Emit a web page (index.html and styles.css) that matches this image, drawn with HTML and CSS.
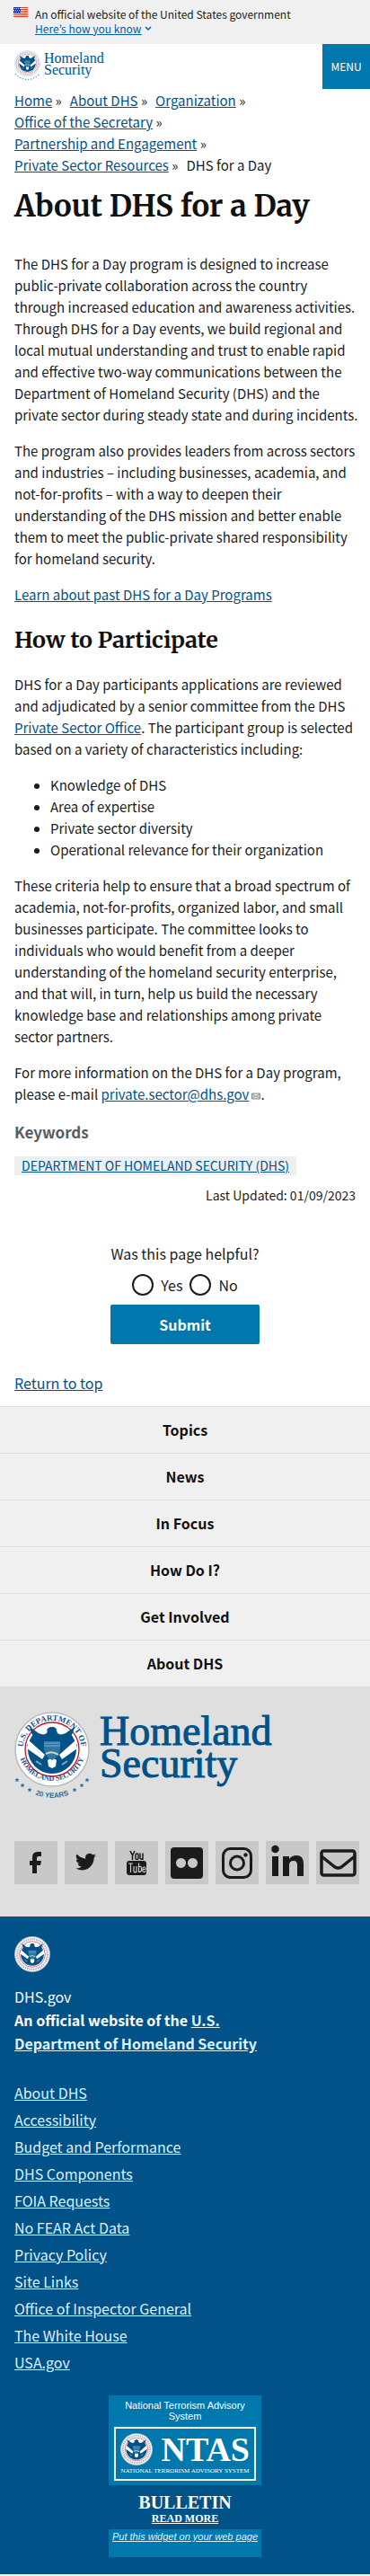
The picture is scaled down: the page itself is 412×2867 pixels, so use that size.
FILE: index.html
```html
<!DOCTYPE html>
<html lang="en">
<head>
<meta charset="utf-8">
<meta name="viewport" content="width=device-width, initial-scale=1">
<title>About DHS for a Day | Homeland Security</title>
<link rel="stylesheet" href="styles.css">
</head>
<body>
<svg class="sprite" aria-hidden="true">
  <defs>
    <path id="ring-top" d="M13 57A32.500 32.500 0 1 1 71 57"/>
    <path id="ring-bottom" d="M4.500 44A37.800 37.800 0 0 0 79.500 44"/>
    <symbol id="seal-core" viewBox="0 0 84 84">
      <circle cx="42" cy="42" r="41" fill="#fff" stroke="#b4b9c4" stroke-width="1.500"/>
      <circle cx="42" cy="42" r="30" fill="#fff" stroke="#c41230" stroke-width="1.300"/>
      <circle cx="42" cy="42" r="27" fill="#005288"/>
      <path d="M23 23Q31 28 36 24Q37 18 42 17Q47 18 48 24Q53 28 61 23L55 17Q42 10 29 17Z" fill="#fff"/>
      <path d="M36 21Q37 17 42 17Q46 17 47 20L44 22V28H38L39 22Z" fill="#005288"/>
      <path d="M17 17L27 24L36 27L33 35Q20 32 17 17ZM67 17L57 24L48 27L51 35Q64 32 67 17Z" fill="#005288"/>
      <path d="M14 36L34 53L30 58Q16 52 14 36ZM70 36L50 53L54 58Q68 52 70 36Z" fill="#005288"/>
      <path d="M16 32L34 48L31 53L14 41ZM68 32L50 48L53 53L70 41ZM37 54L42 51L47 54L46 61L42 63L38 61Z" fill="#fff"/>
      <path d="M33 33H51V42Q50 50 42 54Q34 50 33 42Z" fill="#2e78a7"/>
      <path d="M33 35H51M33 38H51" stroke="#8cb6d3" stroke-width=".8"/>
      <path d="M35 47Q42 43 49 48" stroke="#d6d2a2" stroke-width="2" fill="none"/>
      <path d="M24 55L30 59M59 55L53 59" stroke="#84a9bd" stroke-width="2"/>
    </symbol>
    <symbol id="seal" viewBox="0 0 84 84">
      <use href="#seal-core" width="84" height="84"/>
      <text class="ring ring-upper"><textPath href="#ring-top" startOffset="50%" text-anchor="middle">U.S. DEPARTMENT OF</textPath></text>
      <text class="ring"><textPath href="#ring-bottom" startOffset="50%" text-anchor="middle">HOMELAND SECURITY</textPath></text>
    </symbol>
    <symbol id="seal-small" viewBox="0 0 84 84">
      <use href="#seal-core" width="84" height="84"/>
      <circle cx="42" cy="42" r="35.500" fill="none" stroke="#a9b3c6" stroke-width="5" stroke-dasharray="3 2"/>
    </symbol>
    <path id="years" d="M14 88Q42 104 70 88"/>
    <path id="star" d="M0-2.600L.8-.8L2.600-.8L1.200.4L1.700 2.300L0 1.200L-1.700 2.300L-1.200.4L-2.600-.8L-.8-.8Z"/>
  </defs>
</svg>

<section class="banner" aria-label="Official government website">
  <svg class="flag" viewBox="0 0 16 11" aria-hidden="true">
    <path fill="#fff" d="M0 0h16v11H0z"/>
    <path stroke="#db3e1f" d="M0 .5h16M0 2.500h16M0 4.500h16M0 6.500h16M0 8.500h16M0 10.500h16"/>
    <path fill="#1e33b1" d="M0 0h8v7H0z"/>
    <path stroke="#fff" stroke-width=".8" stroke-dasharray="1 1" d="M1 1.500h7M0 3.500h7M1 5.500h7"/>
  </svg>
  <div>
    <p>An official website of the United States government</p>
    <button class="know" type="button"><span>Here’s how you know</span>
      <svg viewBox="0 0 8 6" aria-hidden="true"><path d="M1 1l3 3 3-3" fill="none" stroke="#005ea2" stroke-width="1.500"/></svg>
    </button>
  </div>
</section>

<header class="header">
  <a class="logo" href="#" aria-label="Homeland Security home">
    <svg class="logo-seal" viewBox="0 0 84 98" aria-hidden="true">
      <use href="#seal-small" width="84" height="84"/>
      <path d="M3 76Q42 112 81 76" fill="none" stroke="#7c9bb5" stroke-width="4" stroke-dasharray="4 5"/>
    </svg>
    <span class="logo-text">Homeland<br>Security</span>
  </a>
  <button class="menu" type="button">MENU</button>
</header>

<main class="main">
  <nav aria-label="Breadcrumb">
    <ol class="crumbs">
      <li><a href="#">Home</a></li>
      <li><a href="#">About DHS</a></li>
      <li><a href="#">Organization</a></li>
      <li><a href="#">Office of the Secretary</a></li>
      <li><a href="#">Partnership and Engagement</a></li>
      <li><a href="#">Private Sector Resources</a></li>
      <li>DHS for a Day</li>
    </ol>
  </nav>
  <h1>About DHS for a Day</h1>
  <article class="prose">
    <p>The DHS for a Day program is designed to increase public-private collaboration across the country through increased education and awareness activities. Through DHS for a Day events, we build regional and local mutual understanding and trust to enable rapid and effective two-way communications between the Department of Homeland Security (DHS) and the private sector during steady state and during incidents.</p>
    <p>The program also provides leaders from across sectors and industries – including businesses, academia, and not-for-profits – with a way to deepen their understanding of the DHS mission and better enable them to meet the public-private shared responsibility for homeland security.</p>
    <p><a href="#">Learn about past DHS for a Day Programs</a></p>
    <h2>How to Participate</h2>
    <p>DHS for a Day participants applications are reviewed and adjudicated by a senior committee from the DHS <a href="#">Private Sector Office</a>. The participant group is selected based on a variety of characteristics including:</p>
    <ul>
      <li>Knowledge of DHS</li>
      <li>Area of expertise</li>
      <li>Private sector diversity</li>
      <li>Operational relevance for their organization</li>
    </ul>
    <p>These criteria help to ensure that a broad spectrum of academia, not-for-profits, organized labor, and small businesses participate. The committee looks to individuals who would benefit from a deeper understanding of the homeland security enterprise, and that will, in turn, help us build the necessary knowledge base and relationships among private sector partners.</p>
    <p>For more information on the DHS for a Day program, please e-mail <a href="#">private.sector@dhs.gov</a><svg class="mail" viewBox="0 0 10 8" aria-hidden="true"><path d="M.5 1h9v6h-9zM1 1.500l4 3 4-3M1 6.500l2.500-2.500M9 6.500L6.500 4" fill="#ddd" stroke="#888"/></svg>.</p>
  </article>
  <h3>Keywords</h3>
  <div class="tags"><a href="#">DEPARTMENT OF HOMELAND SECURITY (DHS)</a></div>
  <p class="updated">Last Updated: 01/09/2023</p>
  <form class="survey">
    <fieldset>
      <legend>Was this page helpful?</legend>
      <label><input type="radio" name="helpful"> Yes</label>
      <label><input type="radio" name="helpful"> No</label>
    </fieldset>
    <button type="submit">Submit</button>
  </form>
  <a class="top-link" href="#">Return to top</a>
</main>

<footer>
  <nav class="sections" aria-label="Footer">
    <a href="#">Topics</a>
    <a href="#">News</a>
    <a href="#">In Focus</a>
    <a href="#">How Do I?</a>
    <a href="#">Get Involved</a>
    <a href="#">About DHS</a>
  </nav>
  <div class="brand">
    <div class="brand-logo">
      <svg class="brand-seal" viewBox="0 0 84 98" role="img" aria-label="U.S. Department of Homeland Security, 20 years">
        <use href="#seal" width="84" height="84"/>
        <g fill="#2a6e9f">
          <use href="#star" x="3" y="76"/><use href="#star" x="9" y="82"/><use href="#star" x="17" y="87"/>
          <use href="#star" x="81" y="76"/><use href="#star" x="75" y="82"/><use href="#star" x="67" y="87"/>
        </g>
        <text class="years"><textPath href="#years" startOffset="50%" text-anchor="middle">20 YEARS</textPath></text>
      </svg>
      <p>Homeland<br>Security</p>
    </div>
    <ul class="social">
      <li><a href="#" aria-label="Facebook"><svg viewBox="0 0 48 48"><path d="M30 12v5h-3q-2 0-2 2v3h5l-1 5h-4v9h-5v-9h-3v-5h3v-4q0-6 6-6z"/></svg></a></li>
      <li><a href="#" aria-label="Twitter"><svg viewBox="0 0 24 24"><path transform="translate(6 5.800) scale(.48)" d="M23.950 4.600a10 10 0 0 1-2.800.8 5 5 0 0 0 2.100-2.700 10 10 0 0 1-3.100 1.200 4.900 4.900 0 0 0-8.400 4.500A14 14 0 0 1 1.700 3.100a4.900 4.900 0 0 0 1.500 6.600 4.900 4.900 0 0 1-2.200-.6v.1a4.900 4.900 0 0 0 3.900 4.800 5 5 0 0 1-2.200.1 4.900 4.900 0 0 0 4.600 3.400A9.900 9.900 0 0 1 0 19.500 14 14 0 0 0 7.500 21.700c9.100 0 14-7.500 14-14v-.6a10 10 0 0 0 2.450-2.500z"/></svg></a></li>
      <li><a href="#" aria-label="YouTube"><svg viewBox="0 0 48 48"><path d="M17 11l2.500 5v5M22 11l-2.500 5" fill="none" stroke="#1b1b1b" stroke-width="1.600"/><rect x="23" y="14" width="3" height="6.500" rx="1.500" fill="none" stroke="#1b1b1b" stroke-width="1.500"/><path d="M28 13.500v6q1.500 1.500 3 0v-6M31 19v2" fill="none" stroke="#1b1b1b" stroke-width="1.500"/><rect x="13" y="22" width="22" height="16" rx="3"/><path d="M15 25h5M17.500 25v10M21 28v6q1.500 1.500 3 0v-6M24 33v2M26.500 24.500v10q3 0 3-2v-2.500q0-2-3-1.500M34 33q-.5 2-2 1.500t-1-4q.5-2 2-1.500t1 2.500h-3" fill="none" stroke="#c8c8c8" stroke-width="1.200"/></svg></a></li>
      <li><a href="#" aria-label="Flickr"><svg viewBox="0 0 48 48"><path fill-rule="evenodd" d="M10 7h28q4 0 4 4v27q0 4-4 4H10q-4 0-4-4V11q0-4 4-4zm7.500 12a5.500 5.500 0 1 0 .01 0zm13 0a5.500 5.500 0 1 0 .01 0z"/></svg></a></li>
      <li><a href="#" aria-label="Instagram"><svg viewBox="0 0 48 48"><g fill="none" stroke="#1b1b1b" stroke-width="3"><rect x="8.500" y="8.500" width="31" height="32" rx="8"/><circle cx="24" cy="24.500" r="7.500"/></g><circle cx="33.500" cy="15.500" r="2.200"/></svg></a></li>
      <li><a href="#" aria-label="LinkedIn"><svg viewBox="0 0 48 48"><circle cx="10.500" cy="9" r="4.300"/><path d="M7 17h7v22H7zM19 17h7v3q3-4 8-4 8 0 8 9v14h-7V27q0-5-4-5-5 0-5 5v12h-7z"/></svg></a></li>
      <li><a href="#" aria-label="Email"><svg viewBox="0 0 48 48"><g fill="none" stroke="#1b1b1b" stroke-width="3.500"><rect x="6" y="11" width="37" height="27" rx="2.500"/><path d="M6 17l15 12q3.500 2 7 0l15-12"/></g></svg></a></li>
    </ul>
  </div>
  <div class="identifier">
    <svg class="id-seal" viewBox="0 0 84 84" aria-hidden="true"><use href="#seal-small" width="84" height="84"/></svg>
    <div class="id-text">
      <p>DHS.gov</p>
      <p class="strong">An official website of the <a href="#">U.S. Department of Homeland Security</a></p>
    </div>
    <ul class="links">
      <li><a href="#">About DHS</a></li>
      <li><a href="#">Accessibility</a></li>
      <li><a href="#">Budget and Performance</a></li>
      <li><a href="#">DHS Components</a></li>
      <li><a href="#">FOIA Requests</a></li>
      <li><a href="#">No FEAR Act Data</a></li>
      <li><a href="#">Privacy Policy</a></li>
      <li><a href="#">Site Links</a></li>
      <li><a href="#">Office of Inspector General</a></li>
      <li><a href="#">The White House</a></li>
      <li><a href="#">USA.gov</a></li>
    </ul>
    <aside class="ntas" aria-label="National Terrorism Advisory System">
      <p class="ntas-title">National Terrorism Advisory System</p>
      <div class="ntas-box">
        <div class="ntas-row">
          <svg viewBox="0 0 84 84" aria-hidden="true"><use href="#seal-small" width="84" height="84"/></svg>
          <span>NTAS</span>
        </div>
        <small>NATIONAL TERRORISM ADVISORY SYSTEM</small>
      </div>
      <div class="bulletin">
        <strong>BULLETIN</strong>
        <a href="#">READ MORE</a>
      </div>
      <a class="put" href="#">Put this widget on your web page</a>
    </aside>
  </div>
</footer>
</body>
</html>
```

FILE: styles.css
```css
* { box-sizing: border-box; }
body {
  margin: 0;
  background: #fff;
  color: #1b1b1b;
  font: 15px/24px "Source Sans Pro", "Noto Sans CJK KR", "Noto Sans", sans-serif;
}
h1, h2, h3, p, ul, ol, fieldset { margin: 0; padding: 0; }
a { color: #005288; }
button { font: inherit; border: 0; cursor: pointer; }
.sprite { position: absolute; width: 0; height: 0; }

.banner {
  display: flex;
  gap: 8px;
  padding: 7px 15px;
  min-height: 49px;
  background: #f0f0f0;
  font-size: 12px;
  line-height: 17px;
}
.flag { width: 16px; height: 11px; margin-top: 1px; }
.know {
  display: flex;
  align-items: center;
  gap: 4px;
  padding: 0;
  background: none;
  color: #005ea2;
  line-height: 16px;
}
.know span { text-decoration: underline; }
.know svg { width: 8px; height: 6px; }

.header { display: flex; justify-content: space-between; height: 50px; }
.logo { display: flex; gap: 4px; padding: 7px 0 0 16px; text-decoration: none; }
.logo-seal { width: 29px; height: 34px; }
.logo-text { padding-top: 2px; font: 16px/13px "Liberation Serif", serif; }
.menu { width: 53px; padding: 0; background: #0078ae; color: #fff; font-size: 12px; }

.main { padding: 1px 16px 0; }
.crumbs { display: flex; flex-wrap: wrap; column-gap: 9px; list-style: none; }
.crumbs li:not(:last-child)::after { content: " »"; }
h1, h2 {
  font-family: Merriweather, "DejaVu Serif Condensed", "DejaVu Serif", serif;
  font-weight: bold;
  color: #111;
}
h1 { margin: 14px 0 32px; font-size: 33px; line-height: 40px; }
h2 { font-size: 25px; line-height: 28px; margin: 24px 0; }
.prose { margin-right: -4px; }
.prose p, .prose ul { margin-bottom: 16px; }
.prose ul { padding-left: 40px; }
.mail { width: 10px; height: 8px; margin-left: 3px; }
h3 { margin-top: 18px; font-size: 17px; color: #565c65; }
.tags { margin-top: 15px; line-height: 21px; font-size: 14px; }
.tags a { display: block; width: max-content; padding: 0 8px; background: #edeff0; }
.updated { margin-top: 10px; text-align: right; font-size: 14px; }
.survey {
  display: flex;
  flex-direction: column;
  align-items: center;
  gap: 10px;
  margin-top: 41px;
  font-size: 16px;
}
.survey fieldset { display: flex; flex-wrap: wrap; justify-content: center; gap: 8px; border: 0; }
.survey legend { margin-bottom: 11px; padding: 0; text-align: center; }
.survey label { display: flex; align-items: center; gap: 8px; }
.survey input {
  appearance: none;
  width: 24px;
  height: 24px;
  margin: 0;
  border: 2px solid #1b1b1b;
  border-radius: 50%;
  background: #fff;
}
.survey button {
  width: 166px;
  height: 44px;
  border-radius: 2px;
  background: #0078ae;
  color: #fff;
  font-weight: bold;
}
.top-link { display: block; width: max-content; margin: 31px 0 14px; font-size: 16px; }

.sections a {
  display: block;
  padding: 13px 16px 14px;
  border-top: 1px solid #dcdee0;
  background: #f0f0f0;
  color: #111;
  font-size: 16px;
  font-weight: bold;
  text-align: center;
  text-decoration: none;
}
.brand { padding: 28px 12px 36px 16px; background: #dfdfdf; }
.brand-logo { display: flex; gap: 11px; height: 98px; }
.brand-seal { width: 84px; height: 98px; overflow: visible; }
.ring { font: bold 8px "Liberation Serif", serif; fill: #16507d; }
.ring-upper { font-size: 9px; }
.years { font: bold 8px "Liberation Sans", sans-serif; fill: #2a6e9f; }
.brand-logo p {
  padding-top: 4px;
  font: 46px/36px "Liberation Serif", serif;
  color: #005288;
  -webkit-text-stroke: 1px #005288;
}
.social { display: flex; gap: 8px; margin-top: 46px; list-style: none; }
.social a { display: block; background: #c8c8c8; }
.social svg { display: block; width: 48px; height: 48px; fill: #1b1b1b; }

.identifier {
  display: flex;
  flex-direction: column;
  padding: 22px 16px 19px;
  background: #005288;
  color: #fff;
  font-size: 16px;
  line-height: 26px;
}
.identifier a { color: #dff1ff; }
.id-seal { width: 40px; height: 40px; }
.id-text { max-width: 300px; margin-top: 14px; }
.strong { font-weight: bold; }
.links { margin-top: 27px; list-style: none; line-height: 30px; }

.ntas {
  display: flex;
  flex-direction: column;
  align-self: center;
  width: 170px;
  margin-top: 22px;
  padding-bottom: 15px;
  background: #0078ae;
  text-align: center;
  font: 11px/12px "Liberation Sans", sans-serif;
}
.ntas-title { padding: 5px 12px 6px; }
.ntas-box {
  height: 60px;
  margin: 0 6px 5px;
  padding: 4px 5px;
  border: 2px solid #fff;
}
.ntas-row { display: flex; align-items: center; justify-content: space-between; height: 38px; }
.ntas-row svg { width: 36px; height: 36px; }
.ntas-row span { font: bold 38px/38px "Liberation Serif", serif; }
.ntas small { display: block; font: 7px/10px "Liberation Serif", serif; white-space: nowrap; }
.bulletin {
  display: flex;
  flex-direction: column;
  align-items: center;
  height: 49px;
  padding-top: 8px;
  background: #005288;
  font-family: "Liberation Serif", serif;
}
.bulletin strong { font-size: 20px; line-height: 22px; }
.bulletin a { font-size: 12px; font-weight: bold; line-height: 14px; color: #fff; }
.put { font-size: 11px; font-style: italic; line-height: 16px; white-space: nowrap; }
```
